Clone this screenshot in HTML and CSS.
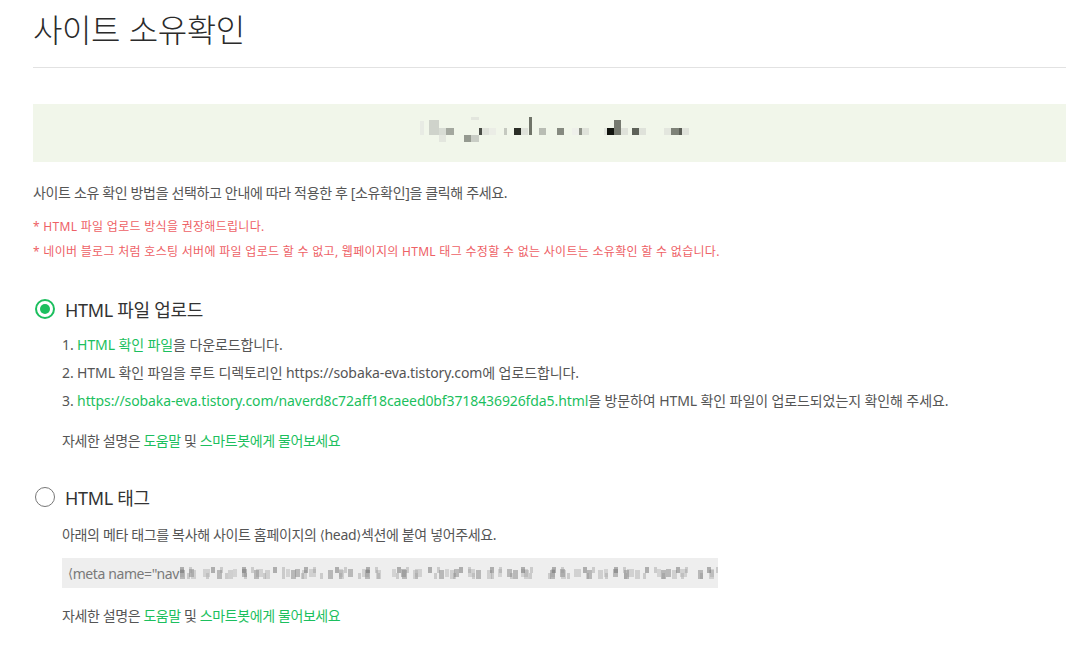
FILE: index.html
```html
<!DOCTYPE html>
<html lang="ko">
<head>
    <meta charset="UTF-8">
    <meta name="viewport" content="width=device-width, initial-scale=1.0">
    <title>사이트 소유확인</title>
    <link rel="stylesheet" href="styles.css">
</head>
<body>
    <div class="page">
        <div class="page-header">
            <h1>사이트 소유확인</h1>
        </div>

        <!-- site address (blurred) -->
        <div class="site-box">
            <svg class="site-blur" width="1033" height="58" viewBox="0 0 1033 58">
                <rect x="387" y="17" width="4" height="14" fill="#e8ebe4"/>
                <rect x="396" y="16" width="10" height="15" fill="#cfd3cb"/>
                <rect x="406" y="24" width="7" height="7" fill="#d8dcd4"/>
                <rect x="413" y="24" width="8" height="7" fill="#a4a89f"/>
                <rect x="406" y="31" width="7" height="7" fill="#e3e6de"/>
                <rect x="438" y="13" width="8" height="3" fill="#e3e6de"/>
                <rect x="431" y="31" width="7" height="7" fill="#959a90"/>
                <rect x="438" y="31" width="8" height="7" fill="#c9cdc5"/>
                <rect x="446" y="24" width="3" height="7" fill="#4a4d46"/>
                <rect x="449" y="24" width="7" height="7" fill="#dfe2da"/>
                <rect x="456" y="24" width="7" height="7" fill="#ebede6"/>
                <rect x="471" y="24" width="3" height="7" fill="#c5c9c0"/>
                <rect x="481" y="24" width="7" height="7" fill="#2b2e27"/>
                <rect x="488" y="24" width="7" height="7" fill="#dfe2da"/>
                <rect x="496" y="13" width="3" height="18" fill="#707469"/>
                <rect x="506" y="24" width="7" height="7" fill="#b9bdb4"/>
                <rect x="524" y="24" width="7" height="7" fill="#868a80"/>
                <rect x="539" y="24" width="7" height="7" fill="#eef0ea"/>
                <rect x="546" y="24" width="3" height="7" fill="#8f9389"/>
                <rect x="549" y="24" width="7" height="7" fill="#dfe2da"/>
                <rect x="571" y="24" width="3" height="7" fill="#e3e6de"/>
                <rect x="574" y="24" width="7" height="7" fill="#11140e"/>
                <rect x="581" y="16" width="7" height="15" fill="#767a70"/>
                <rect x="588" y="24" width="7" height="7" fill="#dfe2da"/>
                <rect x="599" y="24" width="7" height="7" fill="#5e6259"/>
                <rect x="606" y="24" width="7" height="7" fill="#dfe2da"/>
                <rect x="631" y="24" width="7" height="7" fill="#e3e6de"/>
                <rect x="638" y="24" width="8" height="7" fill="#7e8278"/>
                <rect x="646" y="24" width="3" height="7" fill="#5a5d55"/>
                <rect x="649" y="24" width="7" height="7" fill="#dfe2da"/>
            </svg>
        </div>

        <p class="desc">사이트 소유 확인 방법을 선택하고 안내에 따라 적용한 후 [소유확인]을 클릭해 주세요.</p>

        <ul class="notice">
            <li>* HTML 파일 업로드 방식을 권장해드립니다.</li>
            <li>* 네이버 블로그 처럼 호스팅 서버에 파일 업로드 할 수 없고, 웹페이지의 HTML 태그 수정할 수 없는 사이트는 소유확인 할 수 없습니다.</li>
        </ul>

        <div class="method method-file">
            <label class="radio-row">
                <span class="radio checked"></span>
                <span class="radio-label">HTML 파일 업로드</span>
            </label>
            <div class="method-body">
                <ol class="steps">
                    <li>1. <a href="#">HTML 확인 파일</a>을 다운로드합니다.</li>
                    <li>2. HTML 확인 파일을 루트 디렉토리인 https://sobaka-eva.tistory.com에 업로드합니다.</li>
                    <li>3. <a href="#">https://sobaka-eva.tistory.com/naverd8c72aff18caeed0bf3718436926fda5.html</a>을 방문하여 HTML 확인 파일이 업로드되었는지 확인해 주세요.</li>
                </ol>
                <p class="help">자세한 설명은 <a href="#">도움말</a> 및 <a href="#">스마트봇에게 물어보세요</a></p>
            </div>
        </div>

        <div class="method method-tag">
            <label class="radio-row">
                <span class="radio"></span>
                <span class="radio-label">HTML 태그</span>
            </label>
            <div class="method-body">
                <p class="tag-desc">아래의 메타 태그를 복사해 사이트 홈페이지의 <span class="ang">⟨</span>head<span class="ang">⟩</span>섹션에 붙여 넣어주세요.</p>
                <div class="tag-code"><span class="ang">⟨</span>meta name="nav<span class="code-blur"></span></div>
                <p class="help help-tag">자세한 설명은 <a href="#">도움말</a> 및 <a href="#">스마트봇에게 물어보세요</a></p>
            </div>
        </div>
    </div>
</body>
</html>
```

FILE: styles.css
```css
body {
    margin: 0;
    font-family: "Noto Sans", "Noto Sans CJK KR", sans-serif;
    color: #555;
    background-color: #fff;
}
a {
    color: #1cbf5e;
    text-decoration: none;
}
p, ul, ol {
    margin: 0;
    padding: 0;
    list-style: none;
}
.page {
    margin: 0 11px 0 33px;
}
.page-header {
    padding: 8px 0 19px;
    border-bottom: 1px solid #e2e2e2;
}
h1 {
    margin: 0;
    font-family: "Noto Sans CJK KR", sans-serif;
    font-size: 32px;
    line-height: 40px;
    font-weight: 300;
    letter-spacing: -0.4px;
    color: #2b2b2b;
}
.site-box {
    margin-top: 36px;
    height: 58px;
    background-color: #f1f6ea;
}
.site-blur {
    display: block;
}
.desc {
    margin-top: 21px;
    font-size: 14px;
    line-height: 20px;
    letter-spacing: -0.35px;
}
.notice {
    margin-top: 11px;
    font-size: 12px;
    line-height: 25px;
    letter-spacing: 0.3px;
    color: #ee6166;
}
.method-file {
    margin-top: 33px;
}
.method-tag {
    margin-top: 34px;
}
.radio-row {
    display: flex;
    align-items: center;
    gap: 10px;
    height: 24px;
    padding-left: 2px;
}
.radio {
    width: 20px;
    height: 20px;
    box-sizing: border-box;
    border: 1.5px solid #777;
    border-radius: 50%;
    display: flex;
    align-items: center;
    justify-content: center;
}
.radio.checked {
    border: 2px solid #1cbf5e;
}
.radio.checked::after {
    content: "";
    width: 10px;
    height: 10px;
    border-radius: 50%;
    background-color: #1cbf5e;
}
.radio-label {
    font-size: 18px;
    color: #333;
    letter-spacing: -0.3px;
}
.method-body {
    padding-left: 29px;
}
.steps {
    margin-top: 10px;
    font-size: 14px;
    line-height: 28px;
    letter-spacing: -0.1px;
}
.help {
    margin-top: 16px;
    font-size: 14px;
    line-height: 20px;
    letter-spacing: -0.4px;
}
.help-tag {
    margin-top: 18px;
}
.tag-desc {
    margin-top: 16px;
    font-size: 14px;
    line-height: 20px;
    letter-spacing: -0.35px;
}
.ang {
    font-family: "DejaVu Sans", sans-serif;
    font-size: 13px;
}
.tag-code {
    margin-top: 12px;
    width: 656px;
    height: 30px;
    box-sizing: border-box;
    padding-left: 6px;
    display: flex;
    align-items: center;
    background-color: #eee;
    font-size: 14px;
    letter-spacing: -0.4px;
    color: #7a7a7a;
    overflow: hidden;
    white-space: nowrap;
}
.code-blur {
    width: 620px;
    height: 12px;
    margin-left: 1px;
    background:
        repeating-linear-gradient(90deg, rgba(110,110,110,.5) 0 4px, transparent 4px 9px, rgba(150,150,150,.4) 9px 12px, transparent 12px 31px) 0 0 / 620px 6px no-repeat,
        repeating-linear-gradient(90deg, rgba(140,140,140,.55) 0 5px, transparent 5px 11px, rgba(150,150,150,.35) 11px 16px, transparent 16px 37px) 0 3px / 620px 9px no-repeat,
        repeating-linear-gradient(90deg, rgba(170,170,170,.4) 0 4px, transparent 4px 9px, rgba(120,120,120,.45) 9px 14px, transparent 14px 23px, rgba(180,180,180,.5) 23px 30px, transparent 30px 53px) 0 2px / 620px 8px no-repeat,
        repeating-linear-gradient(90deg, transparent 0 7px, rgba(160,160,160,.45) 7px 10px, transparent 10px 19px) 0 6px / 620px 6px no-repeat;
}
```
